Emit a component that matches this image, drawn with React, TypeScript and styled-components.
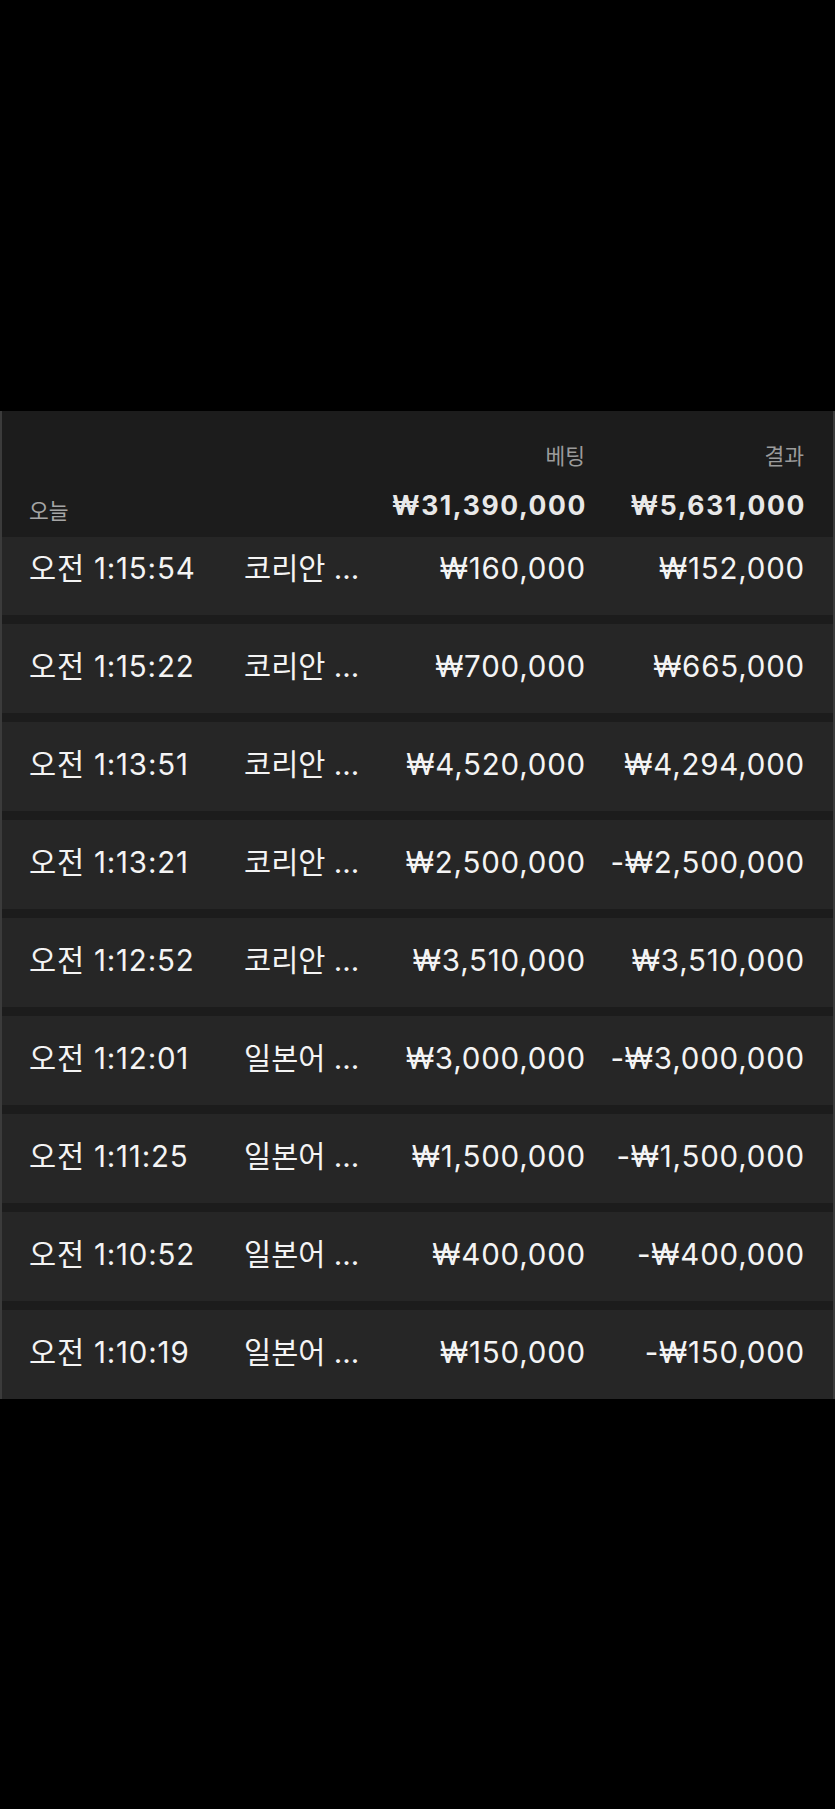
import React from "react";
import styled, { createGlobalStyle } from "styled-components";

const GlobalStyle = createGlobalStyle`
  html, body {
    margin: 0;
    padding: 0;
    background: #000;
  }
  body {
    font-family: "Inter", "Noto Sans CJK KR", sans-serif;
    -webkit-font-smoothing: antialiased;
  }
`;

const Page = styled.div`
  width: 835px;
  min-height: 1809px;
  background: #000;
  padding-top: 411px;
  box-sizing: border-box;
`;

const Panel = styled.section`
  width: 835px;
  box-sizing: border-box;
  background: #1c1c1c;
  border-left: 2px solid #3b3b3b;
  border-right: 2px solid #3b3b3b;
  display: flex;
  flex-direction: column;
  gap: 9px;
`;

const Columns = `
  display: grid;
  grid-template-columns: 215px 141px 200px 219px;
  padding: 0 29px 0 27px;
  align-items: center;
`;

const Header = styled.header`
  ${Columns}
  position: sticky;
  top: 0;
  z-index: 1;
  height: 126px;
  box-sizing: border-box;
  background: #1c1c1c;
  grid-template-rows: auto auto;
  align-content: start;
  padding-top: 31px;
  row-gap: 21px;
  margin-bottom: -20px;
`;

const Label = styled.div<{ $col: number }>`
  grid-column: ${(p) => p.$col};
  grid-row: 1;
  justify-self: end;
  font-family: "Noto Sans CJK KR", sans-serif;
  font-size: 21.5px;
  line-height: 26px;
  color: #9b9b9b;
`;

const Today = styled.div`
  grid-column: 1;
  grid-row: 2;
  align-self: end;
  font-family: "Noto Sans CJK KR", sans-serif;
  font-size: 21.5px;
  line-height: 28px;
  color: #a6a6a6;
  margin-bottom: -3px;
`;

const Total = styled.div<{ $col: number }>`
  grid-column: ${(p) => p.$col};
  grid-row: 2;
  justify-self: end;
  font-family: "Inter", "Noto Sans CJK KR", sans-serif;
  font-weight: 700;
  font-size: 26.5px;
  line-height: 32px;
  letter-spacing: 1.6px;
  margin-right: -2px;
  color: #e8e8e8;
`;

const Row = styled.div`
  ${Columns}
  height: 89px;
  box-sizing: border-box;
  padding-bottom: 5px;
  background: #262626;
  color: #f4f4f4;
  white-space: nowrap;
`;

const Cell = styled.div<{ $align?: "start" | "end"; $tight?: boolean }>`
  justify-self: ${(p) => p.$align ?? "start"};
  margin-right: ${(p) => (p.$align === "end" ? "-1px" : "0")};
  font-family: "Inter", "Noto Sans CJK KR", sans-serif;
  font-size: 29.5px;
  line-height: 36px;
  letter-spacing: ${(p) => (p.$tight ? "0" : "0.8px")};
`;

const rows = [
  ["오전 1:15:54", "코리안 ...", "₩160,000", "₩152,000"],
  ["오전 1:15:22", "코리안 ...", "₩700,000", "₩665,000"],
  ["오전 1:13:51", "코리안 ...", "₩4,520,000", "₩4,294,000"],
  ["오전 1:13:21", "코리안 ...", "₩2,500,000", "-₩2,500,000"],
  ["오전 1:12:52", "코리안 ...", "₩3,510,000", "₩3,510,000"],
  ["오전 1:12:01", "일본어 ...", "₩3,000,000", "-₩3,000,000"],
  ["오전 1:11:25", "일본어 ...", "₩1,500,000", "-₩1,500,000"],
  ["오전 1:10:52", "일본어 ...", "₩400,000", "-₩400,000"],
  ["오전 1:10:19", "일본어 ...", "₩150,000", "-₩150,000"],
];

export default function App() {
  return (
    <Page>
      <GlobalStyle />
      <Panel>
        <Header>
          <Label $col={3}>베팅</Label>
          <Label $col={4}>결과</Label>
          <Today>오늘</Today>
          <Total $col={3}>₩31,390,000</Total>
          <Total $col={4}>₩5,631,000</Total>
        </Header>
        {rows.map((r) => (
          <Row key={r[0]}>
            <Cell>{r[0]}</Cell>
            <Cell $tight>{r[1]}</Cell>
            <Cell $align="end">{r[2]}</Cell>
            <Cell $align="end">{r[3]}</Cell>
          </Row>
        ))}
      </Panel>
    </Page>
  );
}
